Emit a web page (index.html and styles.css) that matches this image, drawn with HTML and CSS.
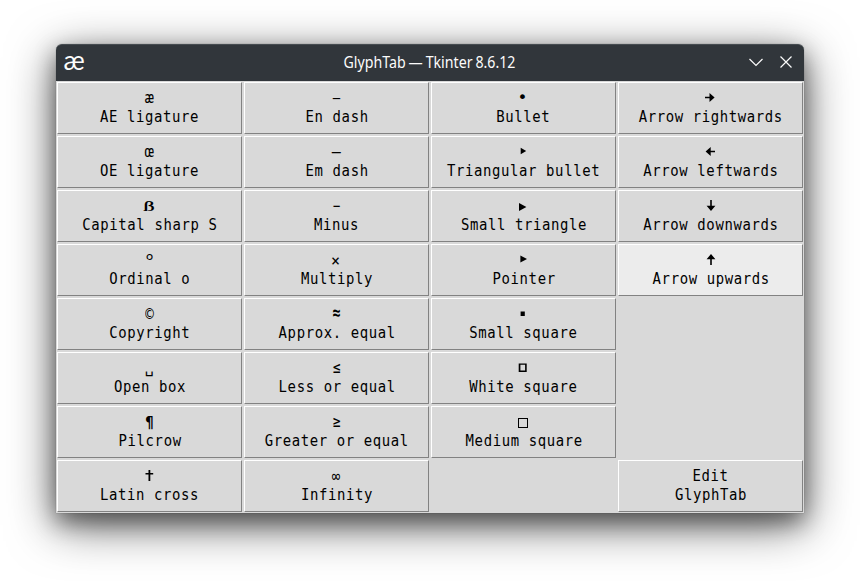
FILE: index.html
```html
<!DOCTYPE html>
<html lang="en">
<head>
<meta charset="utf-8">
<title>GlyphTab</title>
<link rel="stylesheet" href="styles.css">
</head>
<body>
<main class="window">
  <header class="titlebar">
    <span class="logo">æ</span>
    <h1 class="title">GlyphTab — Tkinter 8.6.12</h1>
    <div class="controls">
      <svg width="16" height="16" viewBox="0 0 16 16"><path d="M1.5 5 8 11.5 14.5 5"/></svg>
      <svg width="16" height="16" viewBox="0 0 16 16"><path d="M2.5 2.5l11 11M13.5 2.5l-11 11"/></svg>
    </div>
  </header>
  <section class="grid">
    <button><span class="g">æ</span><span class="label">AE ligature</span></button>
    <button><span class="g endash">–</span><span class="label">En dash</span></button>
    <button><span class="g bullet">•</span><span class="label">Bullet</span></button>
    <button><svg class="sym" viewBox="0 0 15 19"><path d="M2 7.800h4.500V3.900L11.600 8.500 6.500 13.100V9.300H2z"/></svg><span class="label">Arrow rightwards</span></button>

    <button><span class="g">œ</span><span class="label">OE ligature</span></button>
    <button><span class="g">—</span><span class="label">Em dash</span></button>
    <button><svg class="sym" viewBox="0 0 15 19"><path d="M4.700 4.700v6.600l5.500-3.300z"/></svg><span class="label">Triangular bullet</span></button>
    <button><svg class="sym" viewBox="0 0 15 19"><path d="M12 7.800H7.700V3.900L2.600 8.500l5.100 4.600V9.300H12z"/></svg><span class="label">Arrow leftwards</span></button>

    <button><span class="g sharp">ẞ</span><span class="label">Capital sharp S</span></button>
    <button><span class="g endash">−</span><span class="label">Minus</span></button>
    <button><svg class="sym" viewBox="0 0 15 19"><path d="M3 6v8l7.400-4z"/></svg><span class="label">Small triangle</span></button>
    <button><svg class="sym" viewBox="0 0 15 19"><path d="M7.200 3h1.600v5.800h3.600L8 14 3.600 8.800h3.600z"/></svg><span class="label">Arrow downwards</span></button>

    <button><span class="g ordinal">º</span><span class="label">Ordinal o</span></button>
    <button><span class="g times">×</span><span class="label">Multiply</span></button>
    <button><svg class="sym" viewBox="0 0 15 19"><path d="M4.400 4.500v7L11 8z"/></svg><span class="label">Pointer</span></button>
    <button class="hover"><svg class="sym" viewBox="0 0 15 19"><path d="M7.200 14h1.600V8.200h3.600L8 3 3.600 8.200h3.600z"/></svg><span class="label">Arrow upwards</span></button>

    <button><span class="g copy">©</span><span class="label">Copyright</span></button>
    <button><span class="g approx">≈</span><span class="label">Approx. equal</span></button>
    <button><svg class="sym" viewBox="0 0 15 19"><path d="M4.600 6.500h4.200V11H4.600z"/></svg><span class="label">Small square</span></button>
    <i></i>

    <button><span class="g">␣</span><span class="label">Open box</span></button>
    <button><span class="g ineq">≤</span><span class="label">Less or equal</span></button>
    <button><svg class="sym" viewBox="0 0 15 19"><path fill-rule="evenodd" d="M2.700 4.500h8V13h-8zM4.400 5.800v5.800h4.700V5.800z"/></svg><span class="label">White square</span></button>
    <i></i>

    <button><span class="g pilcrow">¶</span><span class="label">Pilcrow</span></button>
    <button><span class="g ineq">≥</span><span class="label">Greater or equal</span></button>
    <button><svg class="sym" viewBox="0 0 15 19"><path fill-rule="evenodd" d="M2 5h10v10H2zM3 6v8h8V6z"/></svg><span class="label">Medium square</span></button>
    <i></i>

    <button><svg class="sym" viewBox="0 0 15 19"><path d="M6.500 3h1.800v3h2.900v1.500H8.300V14H6.500V7.500H3.500V6h3z"/></svg><span class="label">Latin cross</span></button>
    <button><span class="g inf">∞</span><span class="label">Infinity</span></button>
    <i></i>
    <button><span class="label">Edit</span><span class="label">GlyphTab</span></button>
  </section>
</main>
</body>
</html>
```
FILE: styles.css
```css
* { box-sizing: border-box; }

body {
  margin: 0;
  height: 581px;
  padding: 44px 56px 0;
  background: #fff;
  overflow: hidden;
}

.window {
  width: 748px;
  border-radius: 6px 6px 0 0;
  box-shadow: 0 12px 48px rgba(0, 0, 0, .6), 0 9px 22px rgba(0, 0, 0, .42), 0 0 1px rgba(0, 0, 0, .5);
}

.titlebar {
  display: grid;
  grid-template-columns: 60px 1fr 60px;
  align-items: center;
  height: 37px;
  padding: 0 10px 0 7px;
  border-top: 1px solid #464c51;
  border-radius: 6px 6px 0 0;
  background: #31363b;
  color: #fcfcfc;
}

.logo {
  font: 400 27px/30px Lato, "Noto Sans", sans-serif;
  transform: translate(.5px, -3px) scaleX(.98);
  transform-origin: left;
}

.title {
  margin: 0;
  text-align: center;
  font: 400 15px/20px "Noto Sans", sans-serif;
  word-spacing: -.8px;
  white-space: nowrap;
  transform: translate(1px, -1px) scale(.945, 1.06);
}

.controls {
  display: flex;
  justify-content: flex-end;
  gap: 14px;
}

.controls svg {
  margin-top: -2px;
  fill: none;
  stroke: #fcfcfc;
  stroke-width: 1.2;
}

.grid {
  display: grid;
  grid-template-columns: repeat(4, 185px);
  grid-auto-rows: 52px;
  gap: 2px;
  padding: 1px;
  background: #d9d9d9;
}

button {
  display: flex;
  flex-direction: column;
  align-items: center;
  margin: 0;
  padding: 6px 0 0;
  border: 1px solid;
  border-color: #fff #828282 #828282 #fff;
  background: #d9d9d9;
  color: #000;
  font: 15px/19px "DejaVu Sans Mono", monospace;
  white-space: nowrap;
}

.hover { background: #ececec; }

.label {
  letter-spacing: .66px;
  transform: translateX(.2px) scaleX(.93);
}

.g {
  display: block;
  height: 19px;
  transform: translateX(-.3px);
}

.sym {
  width: 15px;
  height: 19px;
}

.endash { transform: scaleX(.82); }
.bullet { transform: translateX(-1px) scale(1.1); }
.sharp { font-weight: bold; transform: translateX(-.5px); }
.ordinal { font-family: "Liberation Mono", monospace; font-size: 16px; transform: translateY(1px); }
.times { transform: translate(-1px, 1px); }
.copy { transform: scale(.95, 1.15); }
.approx { font-weight: bold; transform: translateY(-1px) scale(.88, 1.3); }
.ineq { transform: translateY(-1px) scale(.85, 1.15); }
.pilcrow { font-weight: bold; transform: translateY(1px) scaleX(.9); }
.inf { transform: translateX(-.5px) scale(.95, 1.15); }
```
